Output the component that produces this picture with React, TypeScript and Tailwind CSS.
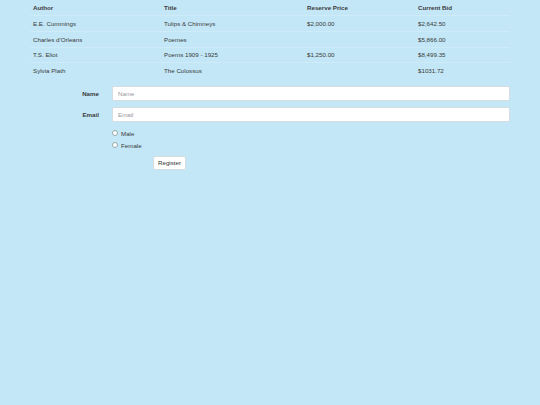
const ROWS = [
  { author: "E.E. Cummings", title: "Tulips & Chimneys", reserve: "$2,000.00", bid: "$2,642.50" },
  { author: "Charles d'Orleans", title: "Poemes", reserve: "", bid: "$5,866.00" },
  { author: "T.S. Eliot", title: "Poems 1909 - 1925", reserve: "$1,250.00", bid: "$8,499.35" },
  { author: "Sylvia Plath", title: "The Colossus", reserve: "", bid: "$1031.72" },
];

export default function App() {
  return (
    <div className="min-h-[405px] w-[540px] bg-[#c3e7f6] text-[6.2px] leading-[9px] text-[#3a3a3a] [font-family:'Liberation_Sans',Arial,sans-serif]">
      <div className="px-[30px]">
        <table className="w-full border-collapse text-left">
          <thead>
            <tr className="h-[15.5px]">
              <th className="w-[131px] px-[3px] font-bold">Author</th>
              <th className="w-[143px] px-[3px] font-bold">Title</th>
              <th className="w-[111px] px-[3px] font-bold">Reserve Price</th>
              <th className="px-[3px] font-bold">Current Bid</th>
            </tr>
          </thead>
          <tbody>
            {ROWS.map((r) => (
              <tr key={r.author} className="h-[15.75px] border-t border-[#cdebf8]">
                <td className="px-[3px]">{r.author}</td>
                <td className="px-[3px]">{r.title}</td>
                <td className="px-[3px]">{r.reserve}</td>
                <td className="px-[3px]">{r.bid}</td>
              </tr>
            ))}
          </tbody>
        </table>
      </div>

      <form className="mt-[7px] px-[30px]">
        <div className="flex items-center">
          <label className="w-[70px] pr-[1px] text-right font-bold">Name</label>
          <input
            placeholder="Name"
            className="ml-[12px] h-[15px] flex-1 rounded-[2px] border border-[#d6dde0] bg-white px-[5px] text-[6.2px] placeholder:text-[#999] outline-none"
          />
        </div>
        <div className="mt-[6px] flex items-center">
          <label className="w-[70px] pr-[1px] text-right font-bold">Email</label>
          <input
            placeholder="Email"
            className="ml-[12px] h-[15px] flex-1 rounded-[2px] border border-[#d6dde0] bg-white px-[5px] text-[6.2px] placeholder:text-[#999] outline-none"
          />
        </div>
        <div className="ml-[82px] mt-[7px] flex flex-col gap-[3px]">
          {["Male", "Female"].map((g) => (
            <label key={g} className="flex items-center gap-[3px]">
              <span className="inline-block h-[6px] w-[6px] rounded-full border border-[#9aa] bg-white" />
              {g}
            </label>
          ))}
        </div>
        <div className="ml-[123px] mt-[6px]">
          <button
            type="button"
            className="h-[14px] w-[33px] rounded-[2px] border border-[#d6dde0] bg-white text-[6.2px] text-[#333]"
          >
            Register
          </button>
        </div>
      </form>
    </div>
  );
}
